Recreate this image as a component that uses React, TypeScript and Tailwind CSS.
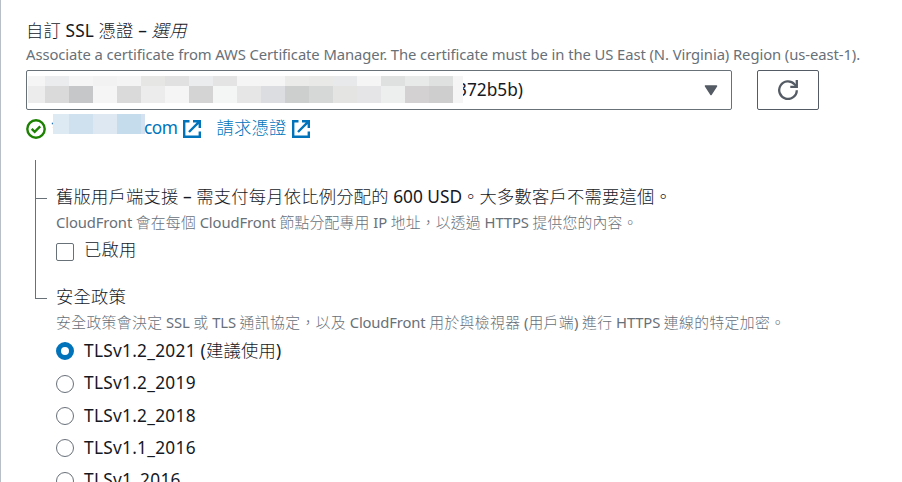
import type { ReactNode } from "react";

const topRow = ["#f5f5f5", "#ebecee", "#f5f5f5", "#f2f2f2", "#f4f4f4", "#e6e6e4", "#e1e1e1", "#ebecee", "#e4e4e4", "#f5f5f5", "#f5f5f5", "#ebecea", "#e9e9e8", "#e8e9eb", "#f5f5f5", "#dfe1e0", "#e8eae9", "#dfe1e0", "#f5f5f5"];
const bottomRow = ["#ececec", "#dadada", "#c6c7c9", "#f5f5f5", "#dadada", "#ececec", "#f5f5f5", "#d4d4d4", "#f3f6f5", "#e6e6e6", "#dcdde0", "#cdcfce", "#d6d8d7", "#e4e4e3", "#e5e5e7", "#edeeee", "#d3d1d2", "#cecece", "#f5f5f5"];

function Mosaic() {
  return (
    <div className="relative mt-[5px] grid h-[27px] w-[435px] shrink-0 grid-cols-[17px_repeat(17,24px)_10px] grid-rows-[10px_17px] self-start">
      {[...topRow, ...bottomRow].map((c, i) => (
        <div key={i} style={{ backgroundColor: c }} />
      ))}
    </div>
  );
}

function Cjk({ children, wide }: { children: ReactNode; wide?: boolean }) {
  return <span className={wide ? "font-light tracking-[0.4px]" : "font-light tracking-[0.22px]"}>{children}</span>;
}

function ExternalIcon() {
  return (
    <svg width="18" height="18" viewBox="0 0 18 18" fill="none" stroke="#0073bb" strokeWidth="2.4" className="shrink-0">
      <path d="M6.5 1.2H1.2v15.6h15.6V11.5" />
      <path d="M10 1.2h6.8V8M16.8 1.2L6 12" />
    </svg>
  );
}

function Radio({ checked }: { checked?: boolean }) {
  return checked ? (
    <span className="mt-px size-[18px] shrink-0 rounded-full border-[5.5px] border-[#0073bb] bg-white" />
  ) : (
    <span className="mt-px size-[18px] shrink-0 rounded-full border border-[#687078] bg-white" />
  );
}

const policies = ["TLSv1.2_2019", "TLSv1.2_2018", "TLSv1.1_2016", "TLSv1_2016"];

export default function App() {
  return (
    <div className="h-[482px] w-[902px] overflow-hidden whitespace-nowrap border-l border-[#b9bfc6] bg-white pl-[25px] pt-[18px] font-['Noto_Sans','Noto_Sans_CJK_TC',sans-serif] text-[17.3px] text-[#16191f]">
      <div className="flex h-[25px] items-center">
        <span className="tracking-[0.1px]"><Cjk>自訂</Cjk> SSL <Cjk>憑證</Cjk> – <i><Cjk>選用</Cjk></i></span>
      </div>
      <div className="flex h-[27px] items-start text-[14.8px] leading-[23px] tracking-[-0.08px] text-[#687078]">
        <span>Associate a certificate from AWS Certificate Manager. The certificate must be in the US East (N. Virginia) Region (us-east-1).</span>
      </div>
      <div className="flex h-10">
        <div className="flex w-[706px] items-center rounded-[2px] border border-[#687078] pl-px">
          <Mosaic />
          <div className="flex grow overflow-hidden">
            <span className="-ml-[6px]">372b5b)</span>
          </div>
          <svg width="14" height="11" viewBox="0 0 14 11" className="mr-[13px] shrink-0">
            <path d="M1.5 1h11L7 9.5z" fill="#545b64" stroke="#545b64" strokeWidth="1.5" strokeLinejoin="round" />
          </svg>
        </div>
        <div className="ml-[25px] flex w-[62px] items-center justify-center rounded-[2px] border border-[#545b64]">
          <svg width="20" height="20" viewBox="0 0 20 20" fill="none" stroke="#545b64" strokeWidth="2.3">
            <path d="M18.8 10.2A8.8 8.8 0 1 1 16.5 4.2L18.7 6.5" />
            <path d="M18.8 0v6.8H12.3" />
          </svg>
        </div>
      </div>
      <div className="flex h-[50px] pt-1 text-[#0073bb]">
        <svg width="20" height="20" viewBox="0 0 20 20" fill="none" stroke="#1d8102" strokeWidth="2.4" className="mt-[5px] shrink-0">
          <circle cx="10" cy="10" r="8.7" />
          <path d="M5.7 9.8l3 3 5.5-5.4" />
        </svg>
        <span className="ml-[5px] h-[28px] w-[2px] overflow-hidden leading-[28px]">*</span>
        <div className="grid h-5 w-[92px] shrink-0 grid-cols-[16px_24px_24px_24px_4px]">
          <div className="bg-[#dde9f3]" />
          <div className="bg-[#cfe0ee]" />
          <div className="bg-[#dde8f3]" />
          <div className="bg-[#c5dced]" />
          <div className="bg-[#d3e1f0]" />
        </div>
        <div className="flex h-[28px] items-center">
          <span className="-ml-px tracking-[-0.5px]">com</span>
        </div>
        <div className="ml-[6px] mt-[6px]"><ExternalIcon /></div>
        <div className="ml-[15px] flex h-[27px] items-center"><Cjk>請求憑證</Cjk></div>
        <div className="ml-[6px] mt-[6px]"><ExternalIcon /></div>
      </div>
      <div className="flex">
        <div className="ml-[9px] h-[139px] w-3 shrink-0 border-b border-l border-[#687078]">
          <div className="h-[39px] border-b border-[#687078]" />
        </div>
        <div className="ml-[9px] pt-6">
          <div className="flex h-[26px] items-center">
            <span><Cjk>舊版用戶端支援</Cjk> – <Cjk>需支付每月依比例分配的</Cjk> 600 USD<Cjk>。大多數客戶不需要這個。</Cjk></span>
          </div>
          <div className="flex h-[25px] items-center text-[14.8px] text-[#687078]">
            <span className="tracking-[-0.12px]">CloudFront <Cjk>會在每個</Cjk> CloudFront <Cjk>節點分配專用</Cjk> IP <Cjk>地址，以透過</Cjk> HTTPS <Cjk>提供您的內容。</Cjk></span>
          </div>
          <div className="flex h-[30px] items-center gap-[10px]">
            <span className="mt-[3px] size-[18px] rounded-[2px] border border-[#687078]" />
            <Cjk>已啟用</Cjk>
          </div>
          <div className="mt-[19px] flex h-[26px] items-center"><Cjk>安全政策</Cjk></div>
          <div className="flex h-6 items-center text-[14.8px] text-[#687078]">
            <span className="tracking-[-0.15px]"><Cjk wide>安全政策會決定</Cjk> SSL <Cjk wide>或</Cjk> TLS <Cjk wide>通訊協定，以及</Cjk> CloudFront <Cjk wide>用於與檢視器</Cjk> (<Cjk wide>用戶端</Cjk>) <Cjk wide>進行</Cjk> HTTPS <Cjk wide>連線的特定加密。</Cjk></span>
          </div>
          <div className="flex h-[33px] items-center gap-[10px]">
            <Radio checked />
            <span className="tracking-[0.27px]">TLSv1.2_2021 (<Cjk>建議使用</Cjk>)</span>
          </div>
          {policies.map((p) => (
            <div key={p} className="flex h-[32.4px] items-center gap-[10px] tracking-[0.27px]">
              <Radio />
              <span>{p}</span>
            </div>
          ))}
        </div>
      </div>
    </div>
  );
}
